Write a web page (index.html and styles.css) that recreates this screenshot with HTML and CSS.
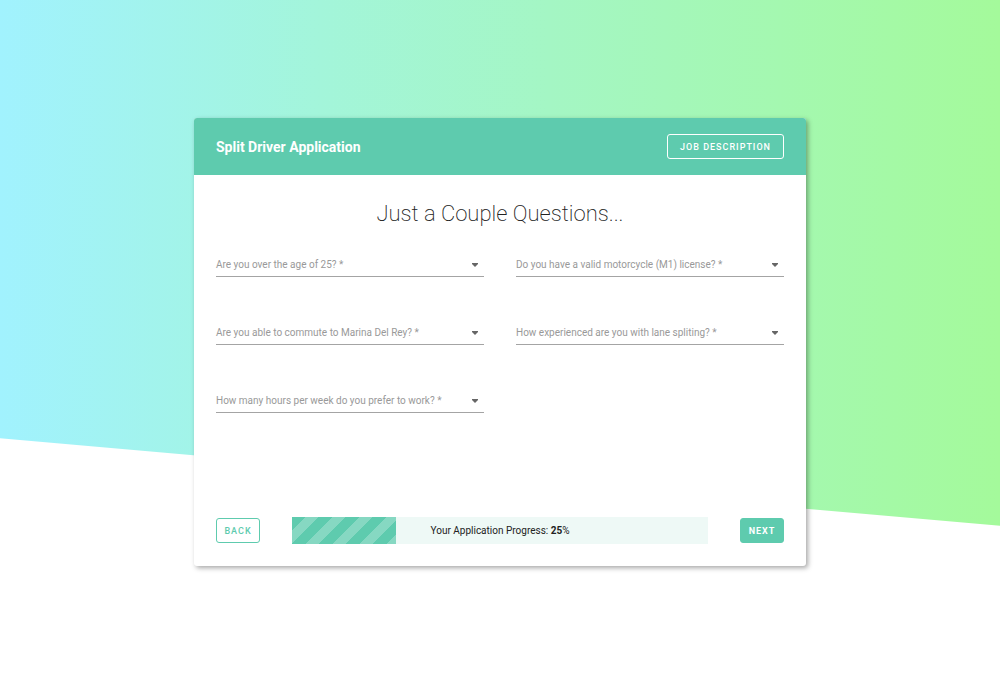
FILE: index.html
```html
<!DOCTYPE html>
<html lang="en">
<head>
<meta charset="utf-8">
<meta name="viewport" content="width=device-width, initial-scale=1">
<title>Split Driver Application</title>
<link rel="stylesheet" href="styles.css">
</head>
<body>
<main class="page">
  <form class="card">
    <header class="card-header">
      <h1 class="card-title">Split Driver Application</h1>
      <button type="button" class="btn btn-light">JOB DESCRIPTION</button>
    </header>
    <div class="card-body">
      <h2 class="heading">Just a Couple Questions...</h2>
      <div class="fields">
        <div class="field">
          <label for="age">Are you over the age of 25? *</label>
          <select id="age" required><option value=""></option></select>
          <svg class="arrow" viewBox="0 0 6 4" aria-hidden="true"><path d="M0 0h6v1L3 4 0 1z"/></svg>
        </div>
        <div class="field">
          <label for="license">Do you have a valid motorcycle (M1) license? *</label>
          <select id="license" required><option value=""></option></select>
          <svg class="arrow" viewBox="0 0 6 4" aria-hidden="true"><path d="M0 0h6v1L3 4 0 1z"/></svg>
        </div>
        <div class="field">
          <label for="commute">Are you able to commute to Marina Del Rey? *</label>
          <select id="commute" required><option value=""></option></select>
          <svg class="arrow" viewBox="0 0 6 4" aria-hidden="true"><path d="M0 0h6v1L3 4 0 1z"/></svg>
        </div>
        <div class="field">
          <label for="experience">How experienced are you with lane spliting? *</label>
          <select id="experience" required><option value=""></option></select>
          <svg class="arrow" viewBox="0 0 6 4" aria-hidden="true"><path d="M0 0h6v1L3 4 0 1z"/></svg>
        </div>
        <div class="field">
          <label for="hours">How many hours per week do you prefer to work? *</label>
          <select id="hours" required><option value=""></option></select>
          <svg class="arrow" viewBox="0 0 6 4" aria-hidden="true"><path d="M0 0h6v1L3 4 0 1z"/></svg>
        </div>
      </div>
    </div>
    <footer class="card-footer">
      <button type="button" class="btn btn-outline">BACK</button>
      <div class="progress" role="progressbar" aria-valuenow="25" aria-valuemin="0" aria-valuemax="100" aria-label="Application progress">
        <div class="progress-fill" style="width: 25%"></div>
        <p class="progress-text">Your Application Progress: <strong>25</strong>%</p>
      </div>
      <button type="submit" class="btn btn-solid">NEXT</button>
    </footer>
  </form>
</main>
</body>
</html>
```

FILE: styles.css
```css
* {
  box-sizing: border-box;
}

body {
  margin: 0;
  background: #fff;
  color: #222;
  font-family: Roboto, "Liberation Sans", sans-serif;
}

.page {
  position: relative;
  display: flex;
  align-items: center;
  justify-content: center;
  min-height: 100vh;
  padding: 16px 16px 20px;
  overflow: hidden;
}

/* Slanted colour band behind the card */
.page::before {
  content: "";
  position: absolute;
  z-index: -1;
  inset: -30% 0 30%;
  background: linear-gradient(90deg, #a1f2fe, #a3f5da 32%, #a4f6c4 55%, #a4f8b0 78%, #a4fa9b);
  transform: skewY(5deg);
}

.card {
  display: flex;
  flex-direction: column;
  width: 100%;
  max-width: 612px;
  min-height: 448px;
  border-radius: 3px;
  background: #fff;
  box-shadow: 2px 2px 5px rgba(0, 0, 0, 0.35);
}

.card-header {
  display: flex;
  align-items: center;
  justify-content: space-between;
  padding: 16px 22px;
  border-radius: 3px 3px 0 0;
  background: #5ecbae;
}

.card-title {
  margin: 0;
  color: #fff;
  font-size: 14px;
  font-weight: 700;
}

.btn {
  min-width: 44px;
  height: 25px;
  padding: 0 7px;
  border: 1px solid #5ecbae;
  border-radius: 3px;
  font-family: inherit;
  font-size: 9px;
  font-weight: 500;
  letter-spacing: 1px;
}

.btn-light {
  padding: 0 12px;
  border-color: #fff;
  background: transparent;
  color: #fff;
}

.btn-outline {
  background: #fff;
  color: #5ecbae;
}

.btn-solid {
  background: #5ecbae;
  color: #fff;
  font-weight: 700;
}

.card-body {
  flex: 1;
  padding: 24px 22px;
}

.heading {
  margin: 0;
  font-size: 22px;
  font-weight: 200;
  line-height: 30px;
  text-align: center;
}

.fields {
  display: grid;
  grid-template-columns: 1fr 1fr;
  gap: 41px 32px;
  margin-top: 21px;
}

.field {
  display: grid;
  align-items: center;
}

.field > * {
  grid-area: 1 / 1;
}

.field label,
.arrow {
  z-index: 1;
  pointer-events: none;
}

.field label {
  padding-top: 2px;
  color: #999;
  font-size: 10px;
}

.field select {
  width: 100%;
  height: 27px;
  border: 0;
  border-bottom: 1px solid #a4a4a4;
  border-radius: 0;
  background: transparent;
  appearance: none;
}

.arrow {
  justify-self: end;
  width: 6px;
  height: 4px;
  margin: 2px 6px 0 0;
  fill: #666;
}

.card-footer {
  display: flex;
  align-items: center;
  gap: 32px;
  padding: 0 22px 22px;
}

.progress {
  display: grid;
  flex: 1;
  height: 27px;
  background: #eef9f6;
}

.progress > * {
  grid-area: 1 / 1;
}

.progress-fill {
  background: linear-gradient(135deg, transparent 25%, rgba(255, 255, 255, 0.25) 25% 50%, transparent 50% 75%, rgba(255, 255, 255, 0.25) 75%) 0 0 / 27px 27px #5ecbae;
}

.progress-text {
  margin: 0;
  font-size: 10px;
  line-height: 27px;
  text-align: center;
}
```
